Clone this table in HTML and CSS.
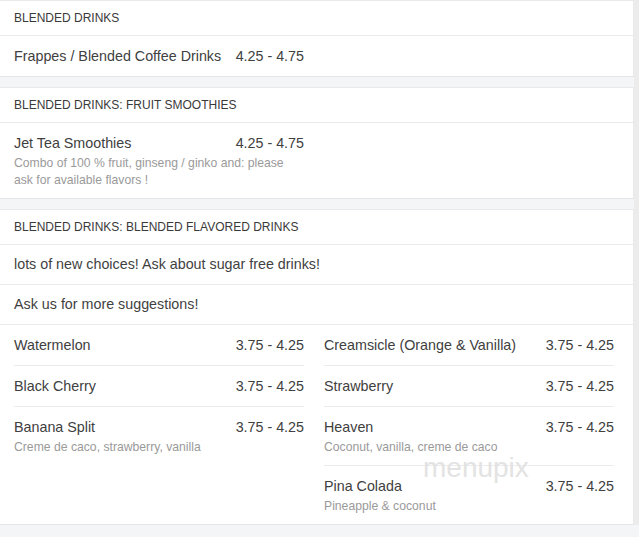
FILE: index.html
```html
<!DOCTYPE html>
<html>
<head>
<meta charset="utf-8">
<link rel="stylesheet" href="styles.css">
</head>
<body>
<div class="page">
  <section class="card">
    <div class="head">BLENDED DRINKS</div>
    <div class="cols">
      <div class="col">
        <div class="item"><div class="line"><span>Frappes / Blended Coffee Drinks</span><span>4.25 - 4.75</span></div></div>
      </div>
      <div class="col"></div>
    </div>
  </section>

  <section class="card">
    <div class="head">BLENDED DRINKS: FRUIT SMOOTHIES</div>
    <div class="cols">
      <div class="col">
        <div class="item has-desc"><div class="line"><span>Jet Tea Smoothies</span><span>4.25 - 4.75</span></div>
          <div class="desc">Combo of 100 % fruit, ginseng / ginko and: please ask for available flavors !</div></div>
      </div>
      <div class="col"></div>
    </div>
  </section>

  <section class="card">
    <div class="head">BLENDED DRINKS: BLENDED FLAVORED DRINKS</div>
    <div class="note">lots of new choices! Ask about sugar free drinks!</div>
    <div class="note">Ask us for more suggestions!</div>
    <div class="cols">
      <div class="col">
        <div class="item"><div class="line"><span>Watermelon</span><span>3.75 - 4.25</span></div></div>
        <div class="item"><div class="line"><span>Black Cherry</span><span>3.75 - 4.25</span></div></div>
        <div class="item has-desc"><div class="line"><span>Banana Split</span><span>3.75 - 4.25</span></div>
          <div class="desc">Creme de caco, strawberry, vanilla</div></div>
      </div>
      <div class="col">
        <div class="item"><div class="line"><span>Creamsicle (Orange &amp; Vanilla)</span><span>3.75 - 4.25</span></div></div>
        <div class="item"><div class="line"><span>Strawberry</span><span>3.75 - 4.25</span></div></div>
        <div class="item has-desc"><div class="line"><span>Heaven</span><span>3.75 - 4.25</span></div>
          <div class="desc">Coconut, vanilla, creme de caco</div></div>
        <div class="item has-desc"><div class="line"><span>Pina Colada</span><span>3.75 - 4.25</span></div>
          <div class="desc">Pineapple &amp; coconut</div></div>
      </div>
    </div>
    <div class="mark">menupix</div>
  </section>
</div>
</body>
</html>
```

FILE: styles.css
```css
* { box-sizing: border-box; }
html, body { margin: 0; padding: 0; }
body {
  background: #f4f5f7;
  font-family: "Liberation Sans", Arial, sans-serif;
  color: #444;
  overflow: hidden;
}
.page {
  width: 639px;
  border-right: 5px solid #ececec;
}
.card {
  position: relative;
  background: #fff;
  border-top: 1px solid #e8e9eb;
  border-bottom: 1px solid #e4e5e7;
  border-right: 1px solid #e8e9eb;
  margin-bottom: 10px;
}
.head {
  height: 35px;
  padding: 0 14px;
  display: flex;
  align-items: center;
  font-size: 12px;
  color: #3a3a3a;
  border-bottom: 1px solid #e9eaec;
}
.note {
  height: 40px;
  padding: 0 14px 1px;
  display: flex;
  align-items: center;
  font-size: 14.3px;
  color: #3f3f3f;
  border-bottom: 1px solid #e9eaec;
}
.cols {
  display: flex;
  gap: 20px;
  padding: 0 14px;
}
.col { width: 290px; }
.item {
  padding: 11px 0;
  border-bottom: 1px solid #ececec;
}
.item.has-desc { padding-bottom: 9px; }
.col .item:last-child { border-bottom: none; }
.line {
  display: flex;
  justify-content: space-between;
  font-size: 14.3px;
  line-height: 18px;
  color: #404040;
}
.desc {
  margin-top: 3px;
  font-size: 12.2px;
  line-height: 17px;
  color: #9a9a9a;
}
.mark {
  position: absolute;
  left: 423px;
  top: 244px;
  font-size: 28px;
  line-height: 28px;
  color: #e3e3e3;
  font-family: "Liberation Sans", Arial, sans-serif;
}
```
